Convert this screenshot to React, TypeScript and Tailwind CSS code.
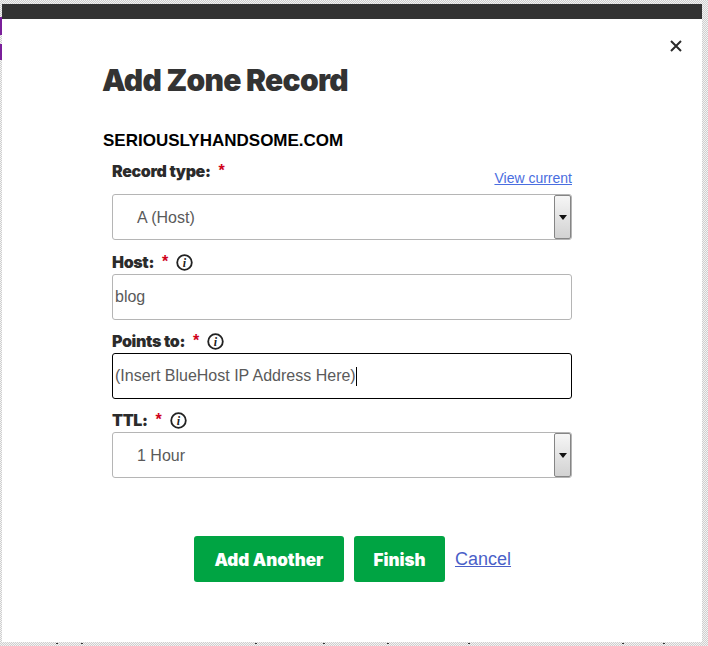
import React from 'react';

const labelFont = "font-['Inter',sans-serif] font-black text-[16px] leading-[20px] text-[#2b2b2b] tracking-[-0.35px]";
const fieldText = "font-['Liberation_Sans',sans-serif] text-[16px] text-[#5a5a5a]";

// stray page text showing through around the modal
const specks = [56, 81, 255, 323, 387, 468, 622, 663];

const InfoIcon = () => (
  <svg width="17" height="17" viewBox="0 0 17 17" fill="none" className="ml-[8px] shrink-0">
    <circle cx="8.5" cy="8.5" r="7.3" stroke="#222" strokeWidth="1.8" />
    <text x="8.5" y="12.5" textAnchor="middle" fontFamily="Liberation Serif, serif" fontStyle="italic" fontWeight="700" fontSize="12" fill="#222">i</text>
  </svg>
);

const Label = ({ text, info }: { text: string; info?: boolean }) => (
  <div className="flex items-center h-[20px]">
    <span className={labelFont}>{text}</span>
    <span className="ml-[8px] text-[#d0021b] font-['Liberation_Sans',sans-serif] font-bold text-[16px] leading-[20px]">*</span>
    {info && <InfoIcon />}
  </div>
);

const SelectBox = ({ value }: { value: string }) => (
  <div className="flex items-stretch h-[46px] bg-white border border-[#b5b5b5] rounded-[3px]">
    <div className={`flex-1 flex items-center pl-[24px] pt-[2px] ${fieldText}`}>{value}</div>
    <div className="w-[17px] flex items-center justify-center border-[1.5px] border-[#858585] rounded-[2px] bg-gradient-to-b from-[#f6f6f6] to-[#d2d2d2]">
      <svg width="8" height="5" viewBox="0 0 8 5"><path d="M0 0h8L4 5z" fill="#111" /></svg>
    </div>
  </div>
);

export default function App() {
  return (
    <div className="relative w-[708px] h-[646px] pt-[4px] pl-[2px] bg-[repeating-conic-gradient(#cfcfcf_0_25%,#f3f3f3_0_50%)] bg-[length:2px_2px]">
      <div className="absolute left-0 top-[17px] w-[2px] h-[18px] bg-[#7a1f9a]" />
      <div className="absolute left-0 top-[44px] w-[2px] h-[16px] bg-[#7a1f9a]" />
      {specks.map((x) => (
        <div key={x} className="absolute top-[643px] w-[2px] h-[1px] bg-[#333]" style={{ left: x }} />
      ))}
      <div className="w-[700px] h-[638px] bg-white flex flex-col">
        <div className="h-[15px] bg-[#333333] shrink-0" />
        <div className="flex justify-end pt-[21px] pr-[20px]">
          <svg width="12" height="12" viewBox="0 0 12 12" fill="none">
            <path d="M1 1l10 10M11 1L1 11" stroke="#2b2b2b" strokeWidth="2" />
          </svg>
        </div>
        <div className="pl-[100px] mt-[10px]">
          <h1 className="font-['Inter',sans-serif] font-black text-[30px] leading-[36px] text-[#333333] tracking-[-0.72px]">Add Zone Record</h1>
          <div className="mt-[33px] pl-[1px] font-['Liberation_Sans',sans-serif] font-bold text-[17px] leading-[20px] text-black">SERIOUSLYHANDSOME.COM</div>
        </div>
        <div className="ml-[110px] w-[460px] mt-[10px]">
          <Label text="Record type:" />
          <div className="flex justify-end mt-[-11px]">
            <a className="font-['Liberation_Sans',sans-serif] text-[14px] leading-[16px] text-[#4a6ee0] underline">View current</a>
          </div>
          <div className="mt-[8px]"><SelectBox value="A (Host)" /></div>
          <div className="mt-[12px]"><Label text="Host:" info /></div>
          <div className={`mt-[2px] h-[46px] flex items-center pl-[2px] border border-[#b5b5b5] rounded-[3px] ${fieldText}`}>blog</div>
          <div className="mt-[11px]"><Label text="Points to:" info /></div>
          <div className={`mt-[2px] h-[46px] flex items-center pl-[2px] border border-black rounded-[3px] ${fieldText}`}>
            (Insert BlueHost IP Address Here)<span className="w-px h-[19px] bg-black" />
          </div>
          <div className="mt-[11px]"><Label text="TTL:" info /></div>
          <div className="mt-[2px]"><SelectBox value="1 Hour" /></div>
        </div>
        <div className="flex items-center ml-[192px] mt-[58px]">
          <button className="w-[150px] h-[46px] pt-[3px] rounded-[3px] bg-[#00a443] text-white font-['Inter',sans-serif] font-black text-[17px]">Add Another</button>
          <button className="ml-[10px] w-[91px] h-[46px] pt-[3px] rounded-[3px] bg-[#00a443] text-white font-['Inter',sans-serif] font-black text-[17px]">Finish</button>
          <a className="ml-[10px] font-['Liberation_Sans',sans-serif] text-[18px] text-[#4a5fc8] underline">Cancel</a>
        </div>
      </div>
    </div>
  );
}
